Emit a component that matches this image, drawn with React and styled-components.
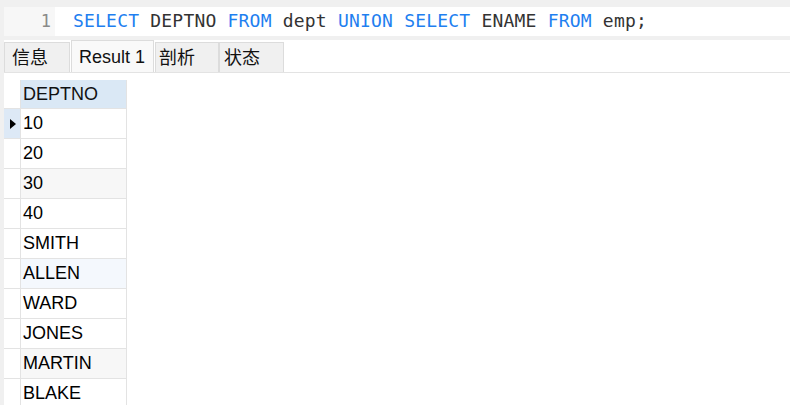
import React from 'react';
import styled, { createGlobalStyle } from 'styled-components';

const GlobalStyle = createGlobalStyle`
  html, body {
    margin: 0;
    padding: 0;
    background: #f0f0f0;
    font-family: "Liberation Sans", "Noto Sans CJK SC", Arial, sans-serif;
  }
`;

const Page = styled.div`
  width: 790px;
  height: 405px;
  display: flex;
  flex-direction: column;
  overflow: hidden;
  padding-top: 7px;
  box-sizing: border-box;
`;

const Editor = styled.div`
  margin-left: 4px;
  height: 29px;
  background: #fff;
  display: flex;
  align-items: stretch;
`;

const Gutter = styled.div`
  width: 51px;
  background: #f7f7f7;
  color: #8a8a8a;
  font-family: "DejaVu Sans Mono", monospace;
  font-size: 17px;
  line-height: 29px;
  text-align: right;
  padding-right: 4px;
  box-sizing: border-box;
`;

const Code = styled.div`
  padding-left: 18px;
  font-family: "DejaVu Sans Mono", "Liberation Mono", monospace;
  font-size: 18px;
  letter-spacing: 0.2px;
  line-height: 28px;
  color: #333;
  white-space: pre;
`;

const Kw = styled.span`
  color: #1f7ff0;
`;

const TabBar = styled.div`
  margin-top: 4px;
  margin-left: 4px;
  height: 33px;
  background: #fff;
  border-bottom: 1px solid #e3e3e3;
  display: flex;
  align-items: flex-end;
  box-sizing: border-box;
`;

const Tab = styled.div`
  width: ${({ $w }) => $w}px;
  height: ${({ $active }) => ($active ? 32 : 30)}px;
  padding-left: ${({ $pl }) => $pl}px;
  box-sizing: border-box;
  background: ${({ $active }) => ($active ? '#f9f9f9' : '#f0f0f0')};
  border: 1px solid #dcdcdc;
  border-bottom: none;
  margin-right: ${({ $mr }) => $mr}px;
  font-size: 18px;
  line-height: ${({ $active }) => ($active ? 32 : 30)}px;
  color: #111;
  white-space: nowrap;
`;

const Content = styled.div`
  flex: 1;
  margin-left: 4px;
  background: #fff;
  padding-top: 7px;
`;

const Grid = styled.div`
  display: grid;
  grid-template-columns: 17px 106px;
  grid-auto-rows: 30px;
  grid-template-rows: 28px;
`;

const Corner = styled.div`
  border-right: 1px solid #e3e3e3;
`;

const HeadCell = styled.div`
  background: #dae8f5;
  border-right: 1px solid #e3e3e3;
  padding-left: 2px;
  font-size: 18px;
  line-height: 28px;
  color: #111;
`;

const RowHead = styled.div`
  background: ${({ $selected }) => ($selected ? '#dde9f6' : '#fff')};
  border-top: 1px solid #e3e3e3;
  border-right: 1px solid #e3e3e3;
  display: flex;
  align-items: center;
  justify-content: flex-end;
  padding-right: 4px;
`;

const Arrow = styled.div`
  width: 0;
  height: 0;
  border-top: 5px solid transparent;
  border-bottom: 5px solid transparent;
  border-left: 6px solid #000;
`;

const Cell = styled.div`
  background: ${({ $bg }) => $bg};
  border-top: 1px solid #e3e3e3;
  border-right: 1px solid #e3e3e3;
  padding-left: 2px;
  font-size: 18px;
  line-height: 29px;
  color: #000;
`;

const rows = [
  { v: '10', bg: '#fff' },
  { v: '20', bg: '#fff' },
  { v: '30', bg: '#f7f7f7' },
  { v: '40', bg: '#fff' },
  { v: 'SMITH', bg: '#fff' },
  { v: 'ALLEN', bg: '#f4f8fd' },
  { v: 'WARD', bg: '#fff' },
  { v: 'JONES', bg: '#fff' },
  { v: 'MARTIN', bg: '#f7f7f7' },
  { v: 'BLAKE', bg: '#fff' },
];

const tabs = [
  { label: '信息', w: 66, pl: 7, mr: 1 },
  { label: 'Result 1', w: 83, pl: 7, mr: 1, active: true },
  { label: '剖析', w: 64, pl: 3, mr: 0 },
  { label: '状态', w: 65, pl: 4, mr: 0 },
];

const App = () => (
  <>
    <GlobalStyle />
    <Page>
      <Editor>
        <Gutter>1</Gutter>
        <Code>
          <Kw>SELECT</Kw> DEPTNO <Kw>FROM</Kw> dept <Kw>UNION</Kw> <Kw>SELECT</Kw> ENAME <Kw>FROM</Kw> emp;
        </Code>
      </Editor>
      <TabBar>
        {tabs.map((t) => (
          <Tab key={t.label} $w={t.w} $pl={t.pl} $mr={t.mr} $active={t.active}>
            {t.label}
          </Tab>
        ))}
      </TabBar>
      <Content>
        <Grid>
          <Corner />
          <HeadCell>DEPTNO</HeadCell>
          {rows.map((r, i) => (
            <React.Fragment key={r.v}>
              <RowHead $selected={i === 0}>{i === 0 && <Arrow />}</RowHead>
              <Cell $bg={r.bg}>{r.v}</Cell>
            </React.Fragment>
          ))}
        </Grid>
      </Content>
    </Page>
  </>
);

export default App;
